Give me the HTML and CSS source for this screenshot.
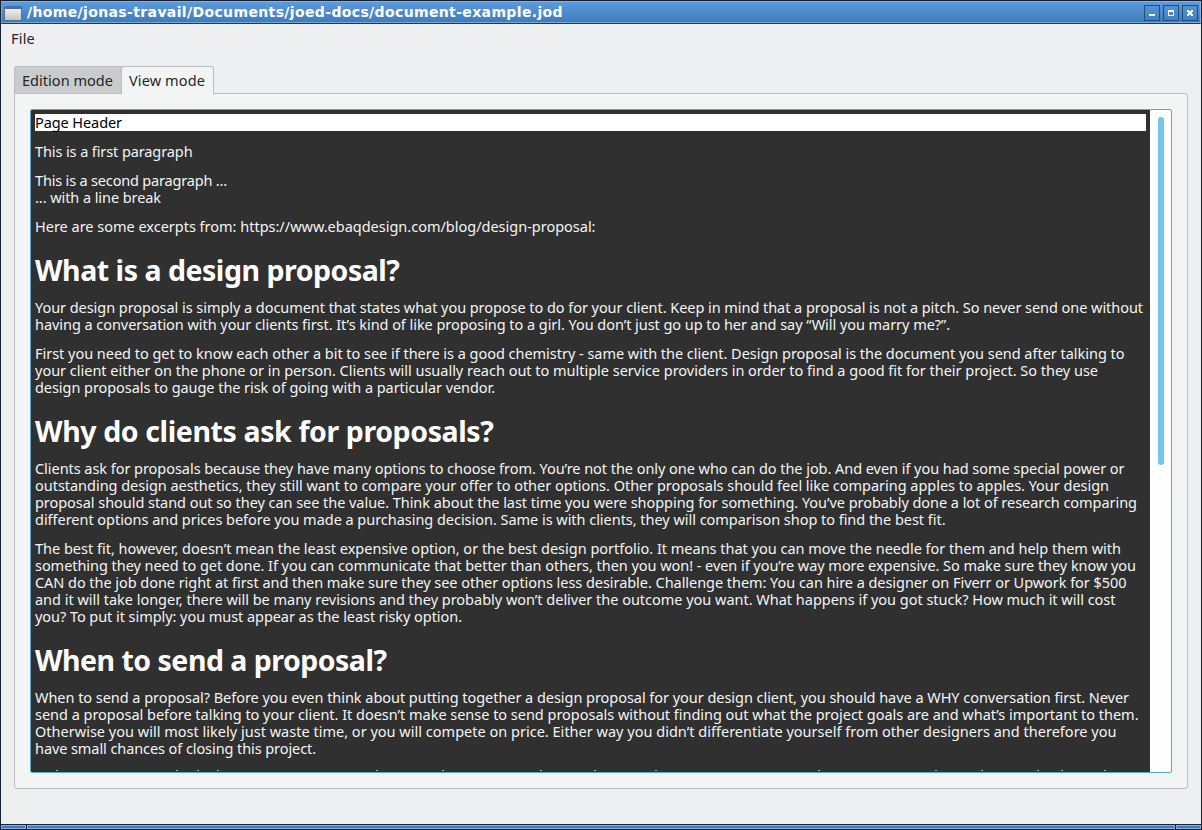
FILE: index.html
```html
<!DOCTYPE html>
<html lang="en">
<head>
<meta charset="utf-8">
<title>document-example.jod</title>
<link rel="stylesheet" href="styles.css">
</head>
<body>
<div class="window">
  <header class="titlebar">
    <svg class="app-icon" width="18" height="16" viewBox="0 0 18 16">
      <defs><linearGradient id="g" x1="0" y1="0" x2="0" y2="1"><stop offset="0" stop-color="#f0f0f0"/><stop offset="1" stop-color="#c4c4c4"/></linearGradient></defs>
      <rect x="0" y="1" width="18" height="15" rx="1" fill="#5a6f8c"/>
      <rect x="1" y="1.500" width="16" height="3" fill="#4270ad"/>
      <rect x="1" y="4" width="16" height="11" fill="url(#g)"/>
    </svg>
    <div class="title"><span data-w="536">/home/jonas-travail/Documents/joed-docs/document-example.jod</span></div>
    <div class="buttons">
      <button class="wbtn"><svg width="14" height="14"><rect x="4" y="8" width="6" height="2" fill="#fff"/></svg></button>
      <button class="wbtn"><svg width="14" height="14"><path fill="#fff" fill-rule="evenodd" d="M4 4h6v6H4zM5 6v3h4V6z"/></svg></button>
      <button class="wbtn"><svg width="14" height="14"><path fill="#fff" d="M4 4h2v1h2V4h2v2H9v2h1v2H8V9H6v1H4V8h1V6H4z"/></svg></button>
    </div>
  </header>
  <nav class="menubar"><span data-w="24">File</span></nav>
  <main class="content">
    <div class="tabs">
      <div class="tab"><span data-w="91">Edition mode</span></div>
      <div class="tab active"><span data-w="76">View mode</span></div>
    </div>
    <section class="panel">
      <div class="viewer">
        <article class="doc">
          <div class="page-header"><span data-w="87">Page Header</span></div>
          <p><span data-w="157.500">This is a first paragraph</span></p>
          <p><span data-w="192">This is a second paragraph ...</span><br><span data-w="126">... with a line break</span></p>
          <p><span data-w="560.500">Here are some excerpts from: https://www.ebaqdesign.com/blog/design-proposal:</span></p>
          <h1><span data-w="364.500">What is a design proposal?</span></h1>
          <p><span data-w="1108">Your design proposal is simply a document that states what you propose to do for your client. Keep in mind that a proposal is not a pitch. So never send one without</span><br><span data-w="915">having a conversation with your clients first. It’s kind of like proposing to a girl. You don’t just go up to her and say “Will you marry me?”.</span></p>
          <p><span data-w="1089.500">First you need to get to know each other a bit to see if there is a good chemistry - same with the client. Design proposal is the document you send after talking to</span><br><span data-w="1063">your client either on the phone or in person. Clients will usually reach out to multiple service providers in order to find a good fit for their project. So they use</span><br><span data-w="460">design proposals to gauge the risk of going with a particular vendor.</span></p>
          <h1><span data-w="458.500">Why do clients ask for proposals?</span></h1>
          <p><span data-w="1089.500">Clients ask for proposals because they have many options to choose from. You’re not the only one who can do the job. And even if you had some special power or</span><br><span data-w="1074">outstanding design aesthetics, they still want to compare your offer to other options. Other proposals should feel like comparing apples to apples. Your design</span><br><span data-w="1102">proposal should stand out so they can see the value. Think about the last time you were shopping for something. You’ve probably done a lot of research comparing</span><br><span data-w="910.500">different options and prices before you made a purchasing decision. Same is with clients, they will comparison shop to find the best fit.</span></p>
          <p><span data-w="1086">The best fit, however, doesn’t mean the least expensive option, or the best design portfolio. It means that you can move the needle for them and help them with</span><br><span data-w="1101">something they need to get done. If you can communicate that better than others, then you won! - even if you’re way more expensive. So make sure they know you</span><br><span data-w="1091.500">CAN do the job done right at first and then make sure they see other options less desirable. Challenge them: You can hire a designer on Fiverr or Upwork for $500</span><br><span data-w="1080.500">and it will take longer, there will be many revisions and they probably won’t deliver the outcome you want. What happens if you got stuck? How much it will cost</span><br><span data-w="427">you? To put it simply: you must appear as the least risky option.</span></p>
          <h1><span data-w="351.500">When to send a proposal?</span></h1>
          <p><span data-w="1094">When to send a proposal? Before you even think about putting together a design proposal for your design client, you should have a WHY conversation first. Never</span><br><span data-w="1103.500">send a proposal before talking to your client. It doesn’t make sense to send proposals without finding out what the project goals are and what’s important to them.</span><br><span data-w="1081.500">Otherwise you will most likely just waste time, or you will compete on price. Either way you didn’t differentiate yourself from other designers and therefore you</span><br><span data-w="281">have small chances of closing this project.</span></p>
          <svg class="clipped-line" width="1111" height="1"><path stroke="#a5a5a5" d="M21 .5h2M141 .5h2M162 .5h2M182 .5h2M341 .5h2M407 .5h2M505 .5h2M559 .5h2M620 .5h2M783 .5h2M900 .5h2M946 .5h2M1002 .5h2M1026 .5h2M1069 .5h2"/></svg>
        </article>
        <div class="scroll"><div class="thumb"></div></div>
      </div>
    </section>
  </main>
  <footer class="grip"><i class="corner"></i><i class="edge"></i><i class="corner"></i></footer>
</div>
<script src="fit.js"></script>
</body>
</html>
```
FILE: styles.css
```css
* { box-sizing: border-box; }
body { margin: 0; }
.window {
  width: 1202px; height: 830px; display: flex; flex-direction: column;
  background: #eeeff1; border: 1px solid #14202f; border-bottom: 0; overflow: hidden;
  font-family: "Noto Sans", "Open Sans", sans-serif; font-size: 14.5px; line-height: 17px; color: #232629;
}
[data-w] { display: inline-block; vertical-align: top; white-space: nowrap; }
.titlebar {
  height: 23px; flex: none; display: flex; align-items: center; padding: 0 2px 0 3px;
  background: linear-gradient(#5b9add, #3f7bb8);
  border: 1px solid #85b3e3; border-left-color: #6fa5dc; border-bottom: 1px solid #173a63;
  box-shadow: inset 0 -1px #79a9da;
}
.app-icon { display: block; margin-right: 5px; margin-left: -1px; }
.title { flex: 1; color: #fff; font: bold 14px/20px "DejaVu Sans", sans-serif; padding-bottom: 2px; }
.title span { line-height: 20px; }
.buttons { display: flex; gap: 3px; }
.wbtn { width: 16px; height: 16px; padding: 0; border: 1px solid #224d80; background: linear-gradient(#5593d5, #427fbe); }
.wbtn svg { display: block; }
.menubar { height: 42px; flex: none; padding: 6px 10px; }
.content { flex: 1; padding: 0 13px; }
.tabs { display: flex; height: 28px; margin-bottom: -1px; position: relative; }
.tab { height: 27px; width: 108px; padding: 5px 7px; background: #cacbcd; border: 1px solid #bcbec0; border-right: 0; border-bottom: 0; border-radius: 3px 0 0 0; }
.tab.active { height: 28px; width: 93px; margin-left: -1px; padding-left: 7px; background: #f3f5f4; border: 1px solid #bcbec0; border-bottom: 0; border-radius: 3px 3px 0 0; }
.panel { height: 696px; border: 1px solid #bcbec0; border-radius: 0 3px 3px 3px; background: #f3f5f4; padding: 15px; }
.viewer { height: 664px; display: flex; border: 1px solid #58a9cd; border-radius: 2px; background: #fdfdfe; overflow: hidden; }
.doc { width: 1119px; height: 662px; padding: 4px 4px 0; background: #303030; color: #f4f4f4; overflow: hidden; }
.page-header { background: #fff; color: #000; height: 17px; }
.doc p { margin: 12px 0; }
.doc h1 { margin: 18px 0 12px; font-size: 28.5px; line-height: 34px; font-weight: bold; color: #fff; }
.clipped-line { display: block; margin-top: 13px; }
.scroll { flex: 1; padding: 7px 0 0 8px; }
.thumb { width: 6px; height: 348px; border-radius: 3px; background: #76c3ee; }
.grip { flex: none; height: 6px; display: flex; gap: 1px; background: #14243c; padding: 1px 0; }
.grip i { display: block; height: 4px; background: #3f7dbd; border: 1px solid #85aedb; }
.corner { width: 25px; }
.edge { flex: 1; }
```
FILE: fit.js
```js
// Tracks each line of text so that it fills its measured width.
document.querySelectorAll('[data-w]').forEach(function (el) {
  var target = parseFloat(el.dataset.w);
  var diff = target - el.getBoundingClientRect().width;
  el.style.letterSpacing = diff / el.textContent.length + 'px';
});
```
